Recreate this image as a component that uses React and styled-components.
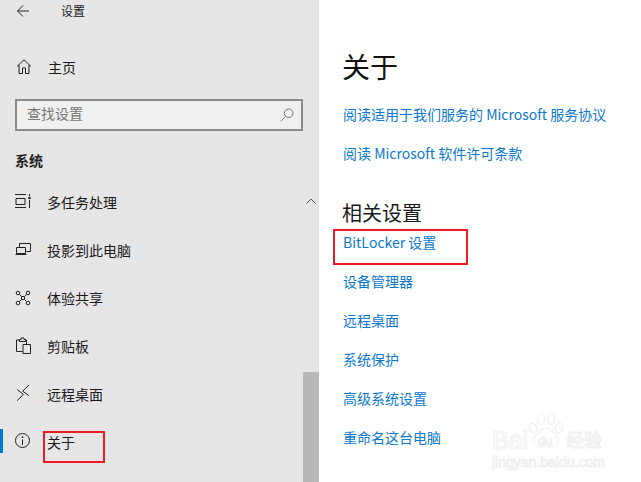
import React from "react";
import styled, { createGlobalStyle } from "styled-components";

const Global = createGlobalStyle`
  html, body { margin: 0; padding: 0; overflow: hidden; background: #fff; }
  * { box-sizing: border-box; }
`;
const Page = styled.div`
  position: relative; width: 641px; height: 482px; display: flex; overflow: hidden;
  font-family: "Noto Sans CJK SC", "Liberation Sans", sans-serif; font-size: 14px; color: #1a1a1a;
`;
const Sidebar = styled.aside`
  position: relative; width: 319px; height: 482px; background: #e6e6e6; flex: none;
  display: flex; flex-direction: column;
`;
const TitleBar = styled.div`
  height: 21px; display: flex; align-items: center; padding-left: 17px; gap: 32px; font-size: 12px;
`;
const Home = styled.div`
  margin-top: 22px; height: 48px; display: flex; align-items: center; padding-left: 16px; gap: 16px;
`;
const Search = styled.div`
  margin: 8px 16px 0 15px; height: 32px; border: 2px solid #8a8a8a; background: #f0f0f0;
  display: flex; align-items: center; justify-content: space-between; padding: 0 7px 0 10px;
  color: #777; font-size: 14px;
`;
const SearchText = styled.span`
  margin-top: -5px;
`;
const Section = styled.div`
  margin: 16px 0 0 15px; height: 26px; line-height: 26px; font-weight: 700; font-size: 14px; color: #222;
`;
const Nav = styled.nav`
  margin-top: 5px; display: flex; flex-direction: column;
`;
const Item = styled.div`
  position: relative; height: 48px; display: flex; align-items: center; padding-left: 15px; gap: 16px;
  ${p => p.$active && `&::before { content: ""; position: absolute; left: 0; top: 11px; width: 3px; height: 24px; background: #0078d7; }`}
`;
const IconSlot = styled.span`
  width: 16px; height: 16px; display: flex; flex: none; margin-top: ${p => p.$dy || 0}px;
`;
const Chevron = styled.svg`
  position: absolute; left: 306px; top: 20px;
`;
const ScrollThumb = styled.div`
  position: absolute; right: 0; top: 372px; width: 16px; height: 110px; background: #b8b8b8;
`;
const Main = styled.main`
  flex: 1; padding: 44px 0 0 24px; display: flex; flex-direction: column; align-items: flex-start;
`;
const Heading = styled.h1`
  margin: 0 0 0 -1px; font-size: 28px; font-weight: 400; line-height: 44px; color: #111;
`;
const Link = styled.a`
  color: #0a78d0; font-size: 14px; line-height: 20px; height: 20px; display: block; white-space: nowrap;
  margin-top: ${p => p.$gap}px;
`;
const Sub = styled.h2`
  margin: 36px 0 0 -1px; font-size: 20px; font-weight: 400; line-height: 28px; height: 28px; color: #1a1a1a;
`;
const Mark = styled.div`
  position: absolute; border: 2px solid #ed1c24; pointer-events: none;
  left: ${p => p.$x}px; top: ${p => p.$y}px; width: ${p => p.$w}px; height: ${p => p.$h}px;
`;
const Watermark = styled.div`
  position: absolute; left: 480px; top: 400px; width: 161px; height: 82px; pointer-events: none;
`;
const Paw = styled.svg`
  position: absolute; left: 48px; top: 12px;
`;
const WmText = styled.div`
  position: absolute; font-family: "Liberation Sans", "Noto Sans CJK SC", sans-serif; white-space: nowrap;
  color: #fff; -webkit-text-stroke: 1px #f0f0f0;
  left: ${p => p.$x}px; top: ${p => p.$y}px; font-size: ${p => p.$s}px; line-height: 1; font-weight: ${p => p.$b || 400};
`;
const Ico = ({ children, dy }) => (
  <IconSlot $dy={dy}>
    <svg width="16" height="16" viewBox="0 0 16 16" fill="none" stroke="#222" strokeWidth="1" style={{ overflow: "visible" }}>{children}</svg>
  </IconSlot>
);

export default function App() {
  return (
    <Page>
      <Global />
      <Sidebar>
        <TitleBar>
          <svg width="12" height="12" viewBox="0 0 12 12" fill="none" stroke="#222" strokeWidth="1">
            <path d="M.5 6H12M6 .5.5 6 6 11.5" />
          </svg>
          <span>设置</span>
        </TitleBar>
        <Home>
          <Ico dy={-1}><path d="M1 7.5 8 .8 15 7.5M3 6V14.5H6.5V9H9.5V14.5H13V6" /></Ico>
          <span>主页</span>
        </Home>
        <Search>
          <SearchText>查找设置</SearchText>
          <svg width="14" height="14" viewBox="0 0 14 14" fill="none" stroke="#777" strokeWidth="1">
            <circle cx="8.7" cy="5.3" r="4.3" /><path d="M5.6 8.4 .7 13.3" />
          </svg>
        </Search>
        <Section>系统</Section>
        <Nav>
          <Item>
            <Ico>
              <path d="M0 .5H11M0 13.5H11M1 4.5H10V10.5H1ZM14.5 0V2M14.5 6V14" />
              <circle cx="14.5" cy="4" r="1.3" fill="#222" stroke="none" />
            </Ico>
            <span>多任务处理</span>
            <Chevron width="10" height="6" viewBox="0 0 10 6" fill="none" stroke="#555"><path d="M.5 5.5 5 1l4.5 4.5" /></Chevron>
          </Item>
          <Item>
            <Ico><path d="M4.5 5V1.5H15.5V9.5H11.5M1.5 5.5H10.5V11.5H1.5ZM.5 12.5H11.5" /></Ico>
            <span>投影到此电脑</span>
          </Item>
          <Item>
            <Ico>
              <circle cx="3" cy="3" r="1.8" /><circle cx="13" cy="3" r="1.8" /><circle cx="3" cy="13" r="1.8" /><circle cx="13" cy="13" r="1.8" />
              <path d="M4.3 4.3 6.5 6.5M11.7 4.3 9.5 6.5M4.3 11.7 6.5 9.5M11.7 11.7 9.5 9.5M6.5 6.5H9.5V9.5H6.5Z" />
            </Ico>
            <span>体验共享</span>
          </Item>
          <Item>
            <Ico>
              <path d="M4.5 2H1.5V13.5H7.5M10.5 2H11.5V6M4.5 3.5V1.5H6V0H9V1.5H10.5V3.5ZM8 6.5H15.5V15.5H8Z" />
            </Ico>
            <span>剪贴板</span>
          </Item>
          <Item>
            <Ico><path d="M2.3 3.7 8.3 8.3 2.3 14.7M14 -1 7.7 5.2 14 9.7" /></Ico>
            <span>远程桌面</span>
          </Item>
          <Item $active>
            <Ico dy={-2}><circle cx="7.5" cy="7.5" r="7" /><path d="M7.5 6.5V12" /><circle cx="7.5" cy="4.2" r=".9" fill="#222" stroke="none" /></Ico>
            <span>关于</span>
          </Item>
        </Nav>
        <ScrollThumb />
      </Sidebar>
      <Main>
        <Heading>关于</Heading>
        <Link $gap={16}>阅读适用于我们服务的 Microsoft 服务协议</Link>
        <Link $gap={19}>阅读 Microsoft 软件许可条款</Link>
        <Sub>相关设置</Sub>
        <Link $gap={5}>BitLocker 设置</Link>
        <Link $gap={19}>设备管理器</Link>
        <Link $gap={19}>远程桌面</Link>
        <Link $gap={19}>系统保护</Link>
        <Link $gap={19}>高级系统设置</Link>
        <Link $gap={19}>重命名这台电脑</Link>
      </Main>
      <Mark $x={43} $y={431} $w={62} $h={32} />
      <Mark $x={333} $y={229} $w={135} $h={36} />
      <Watermark>
        <Paw width="36" height="38" viewBox="0 0 36 38" fill="#fff" stroke="#f0f0f0" strokeWidth="1.2">
          <ellipse cx="5" cy="16" rx="3.6" ry="5" transform="rotate(-20 5 16)" />
          <ellipse cx="13" cy="7" rx="3.6" ry="5.5" />
          <ellipse cx="23" cy="7" rx="3.6" ry="5.5" />
          <ellipse cx="31" cy="16" rx="3.6" ry="5" transform="rotate(20 31 16)" />
          <path d="M18 16c-4 0-6 3-9 6-5 4-4 13 3 13 3 0 4-1 6-1s3 1 6 1c7 0 8-9 3-13-3-3-5-6-9-6Z" />
        </Paw>
        <WmText $x={12} $y={28} $s={25}>Bai</WmText>
        <WmText $x={58} $y={34} $s={13}>du</WmText>
        <WmText $x={86} $y={32} $s={18}>经验</WmText>
        <WmText $x={12} $y={55} $s={14}>jingyan.baidu.com</WmText>
      </Watermark>
    </Page>
  );
}
